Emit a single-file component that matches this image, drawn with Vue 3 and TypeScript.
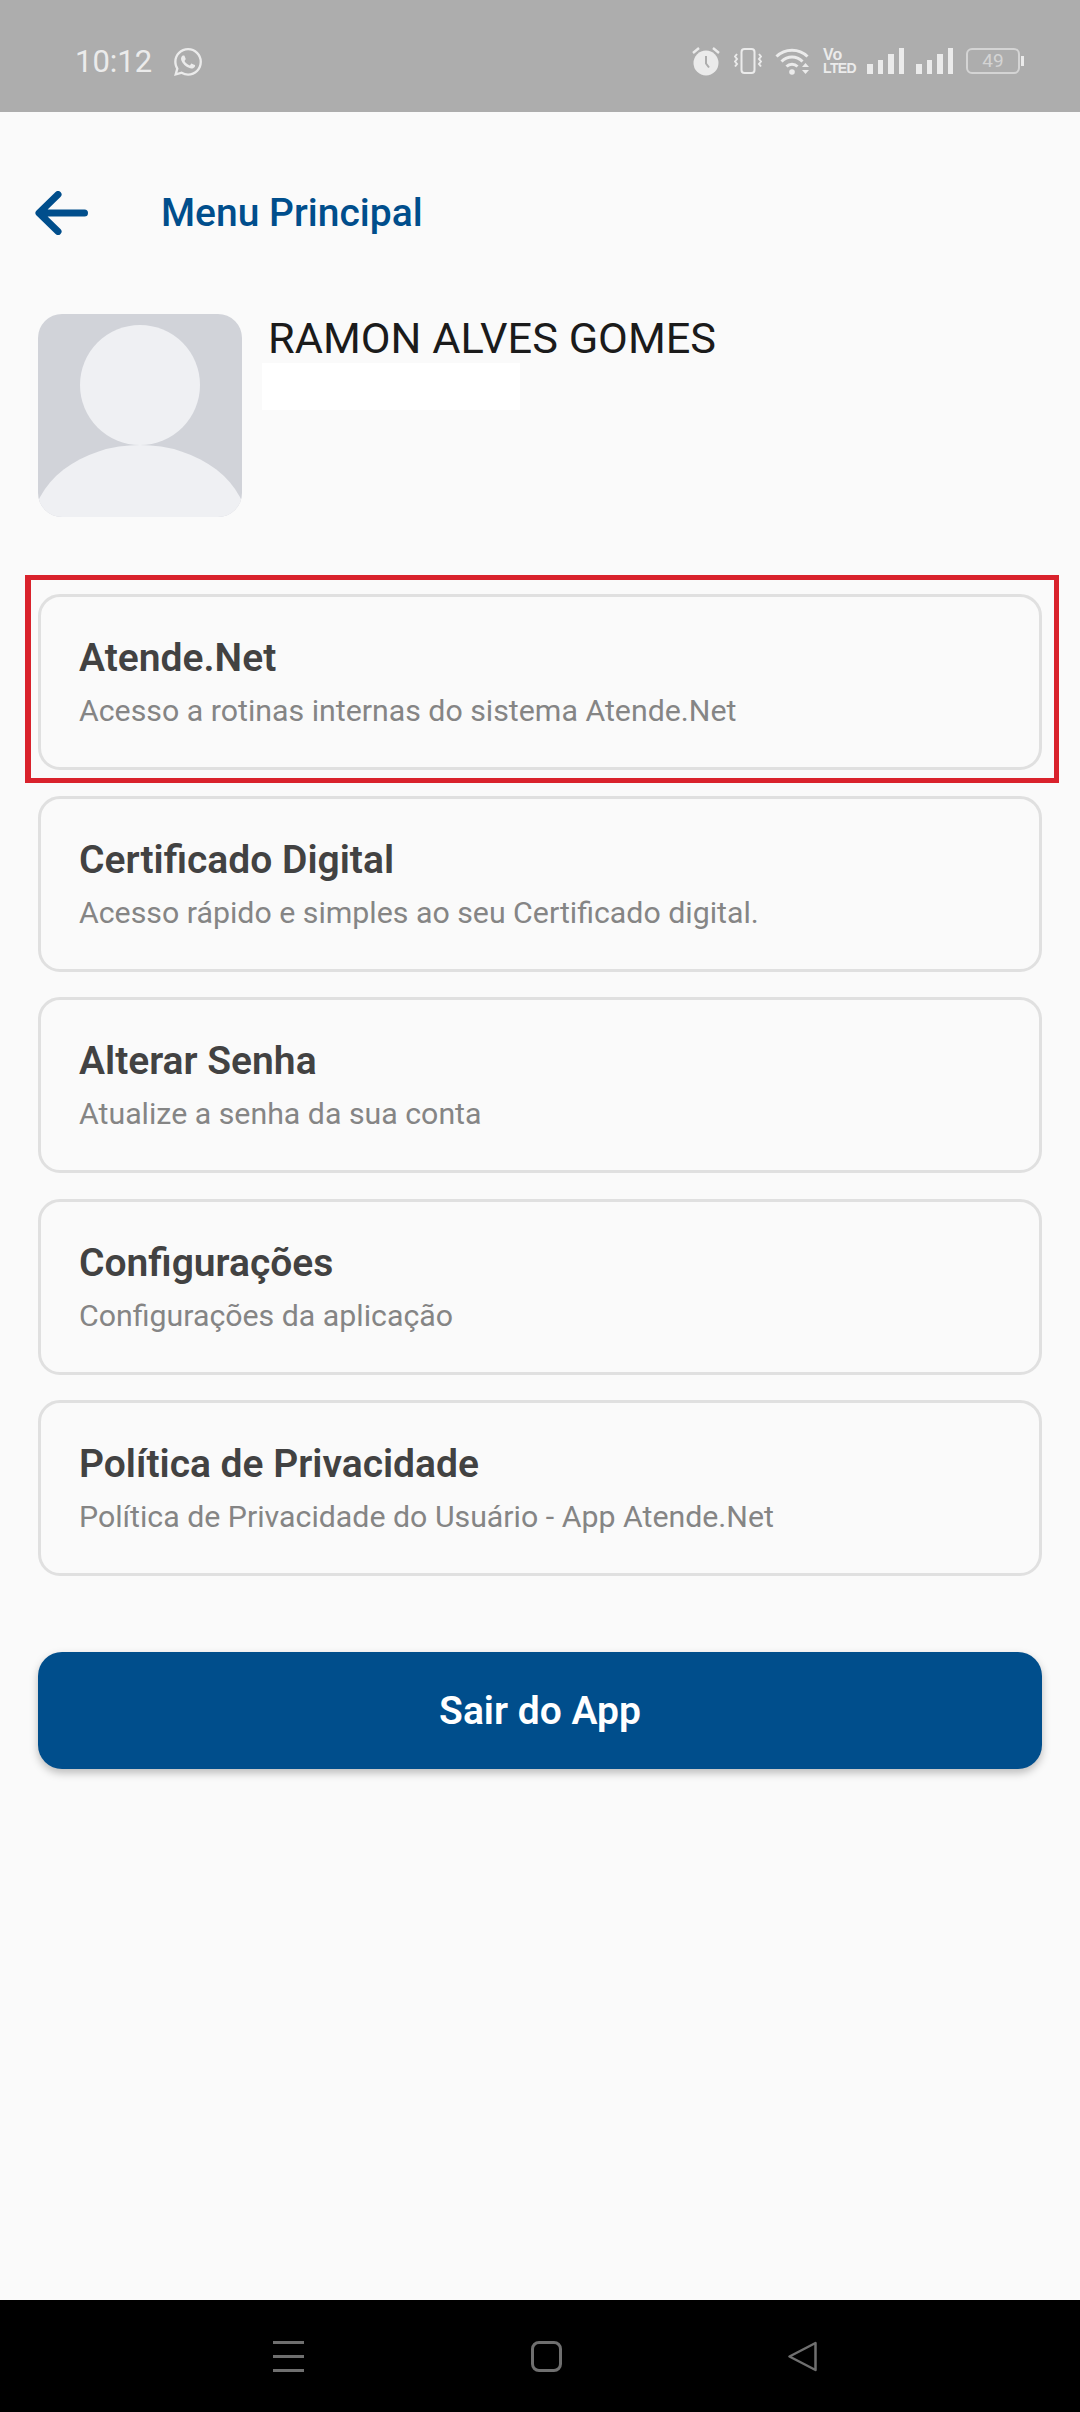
<template>
  <div class="screen">
    <div class="status-bar">
      <span class="time">10:12</span>
      <svg class="whatsapp" viewBox="0 0 24 24" fill="currentColor" aria-hidden="true">
        <path d="M17.472 14.382c-.297-.149-1.758-.867-2.03-.967-.273-.099-.471-.148-.67.15-.197.297-.767.966-.94 1.164-.173.199-.347.223-.644.075-.297-.15-1.255-.463-2.39-1.475-.883-.788-1.48-1.761-1.653-2.059-.173-.297-.018-.458.13-.606.134-.133.298-.347.446-.52.149-.174.198-.298.298-.497.099-.198.05-.371-.025-.52-.075-.149-.669-1.612-.916-2.207-.242-.579-.487-.5-.669-.51-.173-.008-.371-.01-.57-.01-.198 0-.52.074-.792.372-.272.297-1.04 1.016-1.04 2.479 0 1.462 1.065 2.875 1.213 3.074.149.198 2.096 3.2 5.077 4.487.709.306 1.262.489 1.694.625.712.227 1.36.195 1.871.118.571-.085 1.758-.719 2.006-1.413.248-.694.248-1.289.173-1.413-.074-.124-.272-.198-.57-.347m-5.421 7.403h-.004a9.87 9.87 0 01-5.031-1.378l-.361-.214-3.741.982.998-3.648-.235-.374a9.86 9.86 0 01-1.51-5.26c.001-5.45 4.436-9.884 9.888-9.884 2.64 0 5.122 1.03 6.988 2.898a9.825 9.825 0 012.893 6.994c-.003 5.45-4.437 9.884-9.885 9.884m8.413-18.297A11.815 11.815 0 0012.05 0C5.495 0 .16 5.335.157 11.892c0 2.096.547 4.142 1.588 5.945L.057 24l6.305-1.654a11.882 11.882 0 005.683 1.448h.005c6.554 0 11.89-5.335 11.893-11.893a11.821 11.821 0 00-3.48-8.413z" />
      </svg>
      <div class="status-icons">
        <svg class="alarm" viewBox="0 0 30 30" aria-hidden="true">
          <circle cx="15" cy="17" r="12.5" fill="currentColor" />
          <path d="M15 10v7.5l3 4" fill="none" stroke="#adadad" stroke-width="2" />
          <path d="M2 7l6-5M28 7l-6-5" fill="none" stroke="currentColor" stroke-width="2.4" />
        </svg>
        <svg class="vibrate" viewBox="0 0 28 26" fill="none" stroke="currentColor" stroke-width="2" aria-hidden="true">
          <rect x="7.5" y="1" width="13" height="24" rx="3" />
          <path d="M3 6l-2 2.5 2 2.5-2 2.5 2 2.5-2 2.5M25 6l2 2.5-2 2.5 2 2.5-2 2.5 2 2.5" />
        </svg>
        <svg class="wifi" viewBox="0 0 36 28" aria-hidden="true">
          <path d="M1.5 9.5C10 1 24 1 32.5 9.5M6.5 14.5c6-6 15-6 21 0M11.5 19.5c3-3 8-3 11 0" fill="none" stroke="currentColor" stroke-width="3" />
          <circle cx="17" cy="25" r="2.8" fill="currentColor" />
          <path d="M27 20l3.5-4 3.5 4zM27 23h7l-3.5 4z" fill="currentColor" />
        </svg>
        <div class="volte"><span class="vo">Vo</span><span class="lte">LTED</span></div>
        <div v-for="signal in 2" :key="signal" class="signal">
          <i v-for="bar in signalBars" :key="bar" :style="{ height: `${bar}px` }"></i>
        </div>
        <div class="battery">
          <div class="battery-body">49</div>
          <div class="battery-tip"></div>
        </div>
      </div>
    </div>

    <header class="page-header">
      <svg class="back-arrow" viewBox="0 0 53 44" fill="none" stroke="currentColor" stroke-width="7" stroke-linecap="round" stroke-linejoin="round" aria-hidden="true">
        <path d="M49.5 22H5M23 3.5L4 22l19 18.5" />
      </svg>
      <h1 class="page-title">Menu Principal</h1>
    </header>

    <section class="profile">
      <div class="avatar">
        <svg viewBox="0 0 204 203" aria-hidden="true">
          <rect width="204" height="203" fill="#d1d3d9" />
          <circle cx="102" cy="71" r="60" fill="#eff0f3" />
          <ellipse cx="102" cy="215" rx="108" ry="84" fill="#eff0f3" />
        </svg>
      </div>
      <div class="profile-info">
        <div class="profile-name">RAMON ALVES GOMES</div>
        <div class="profile-hidden"></div>
      </div>
    </section>

    <nav class="menu">
      <div v-for="(item, index) in menuItems" :key="item.title" class="menu-card" :class="{ marked: index === 0 }">
        <div class="menu-title">{{ item.title }}</div>
        <div class="menu-subtitle">{{ item.subtitle }}</div>
      </div>
    </nav>

    <button class="logout" type="button">Sair do App</button>

    <div class="nav-bar">
      <div class="nav-menu"><i></i><i></i><i></i></div>
      <div class="nav-home"></div>
      <svg class="nav-back" viewBox="0 0 29 31" fill="none" stroke="currentColor" stroke-width="2.5" stroke-linejoin="round" aria-hidden="true">
        <path d="M27.5 2v27L1.5 15.5z" />
      </svg>
    </div>
  </div>
</template>

<script setup lang="ts">
interface MenuItem {
  title: string;
  subtitle: string;
}

const signalBars = [10, 14, 20, 26];

const menuItems: MenuItem[] = [
  { title: 'Atende.Net', subtitle: 'Acesso a rotinas internas do sistema Atende.Net' },
  { title: 'Certificado Digital', subtitle: 'Acesso rápido e simples ao seu Certificado digital.' },
  { title: 'Alterar Senha', subtitle: 'Atualize a senha da sua conta' },
  { title: 'Configurações', subtitle: 'Configurações da aplicação' },
  { title: 'Política de Privacidade', subtitle: 'Política de Privacidade do Usuário - App Atende.Net' },
];
</script>

<style>
html,
body {
  margin: 0;
  background: #fafafa;
}
</style>

<style scoped>
.screen {
  display: flex;
  flex-direction: column;
  height: 2412px;
  background: #fafafa;
  font-family: Roboto, "Liberation Sans", sans-serif;
  overflow: hidden;
}

.status-bar {
  display: flex;
  align-items: center;
  flex-shrink: 0;
  height: 102px;
  padding: 10px 56px 0 75px;
  background: #adadad;
  color: #ebebeb;
}

.time {
  font-size: 31px;
  line-height: 1;
}

.whatsapp {
  width: 28px;
  height: 28px;
  margin: 2px 0 0 22px;
}

.status-icons {
  display: flex;
  align-items: center;
  margin-left: auto;
}

.alarm {
  width: 30px;
  height: 30px;
}

.vibrate {
  width: 28px;
  height: 26px;
  margin-left: 13px;
}

.wifi {
  width: 36px;
  height: 28px;
  margin-left: 13px;
}

.volte {
  display: flex;
  flex-direction: column;
  width: 32px;
  margin-left: 12px;
  font-family: "Liberation Sans", sans-serif;
  font-weight: 700;
}

.vo {
  font-size: 16px;
  line-height: 15px;
}

.lte {
  font-size: 14px;
  line-height: 13px;
  letter-spacing: -0.6px;
}

.signal {
  display: flex;
  align-items: flex-end;
  gap: 5px;
  height: 26px;
  margin-left: 12px;
}

.signal i {
  display: block;
  width: 5.5px;
  background: currentColor;
}

.battery {
  display: flex;
  align-items: center;
  margin-left: 13px;
}

.battery-body {
  width: 54px;
  height: 26px;
  box-sizing: border-box;
  border: 2px solid currentColor;
  border-radius: 6px;
  color: #d4d4d4;
  font-size: 19px;
  line-height: 22px;
  text-align: center;
}

.battery-tip {
  width: 3px;
  height: 10px;
  margin-left: 1px;
  background: #ebebeb;
}

.page-header {
  display: flex;
  align-items: center;
  flex-shrink: 0;
  height: 42px;
  padding: 80px 0 0 35px;
  color: #004e8c;
}

.back-arrow {
  width: 53px;
  height: 44px;
  flex-shrink: 0;
}

.page-title {
  margin: 0 0 0 73px;
  font-size: 39px;
  font-weight: 500;
  line-height: 42px;
}

.profile {
  display: flex;
  flex-shrink: 0;
  margin: 80px 0 0 38px;
}

.avatar {
  width: 204px;
  height: 203px;
  border-radius: 24px;
  overflow: hidden;
}

.avatar svg {
  display: block;
  width: 100%;
  height: 100%;
}

.profile-info {
  padding-top: 1px;
}

.profile-name {
  margin-left: 26px;
  color: #1b1b1b;
  font-size: 43.3px;
  line-height: 48px;
}

.profile-hidden {
  width: 258px;
  height: 47px;
  margin-left: 20px;
  background: #fff;
}

.menu {
  display: flex;
  flex-direction: column;
  gap: 25.6px;
  margin: 77px 38px 0;
}

.menu-card {
  position: relative;
  box-sizing: border-box;
  height: 176px;
  padding: 38px 0 0 38px;
  border: 3px solid #e0e0e0;
  border-radius: 22px;
}

.menu-card.marked::after {
  content: "";
  position: absolute;
  inset: -22px -20px -16px -16px;
  border: 5px solid #d9222c;
  border-left-width: 6px;
}

.menu-title {
  color: #424242;
  font-size: 39px;
  font-weight: 600;
  line-height: 46px;
}

.menu-subtitle {
  margin-top: 11px;
  color: #858585;
  font-size: 30.3px;
  line-height: 38px;
}

.logout {
  display: block;
  flex-shrink: 0;
  height: 117px;
  margin: 76px 38px 0;
  padding: 0;
  border: 0;
  border-radius: 24px;
  background: #004e8c;
  box-shadow: 0 4px 8px rgba(0, 0, 0, 0.25);
  color: #fff;
  font-family: inherit;
  font-size: 39px;
  font-weight: 600;
}

.nav-bar {
  display: flex;
  align-items: flex-start;
  flex-shrink: 0;
  height: 71px;
  margin-top: auto;
  padding: 41px 0 0 273px;
  background: #000;
  color: #6f6f6f;
}

.nav-menu {
  display: flex;
  flex-direction: column;
  gap: 11px;
  width: 31px;
}

.nav-menu i {
  display: block;
  height: 3px;
  background: currentColor;
}

.nav-home {
  box-sizing: border-box;
  width: 31px;
  height: 31px;
  margin-left: 227px;
  border: 3px solid currentColor;
  border-radius: 8px;
}

.nav-back {
  width: 29px;
  height: 31px;
  margin-left: 226px;
}
</style>
